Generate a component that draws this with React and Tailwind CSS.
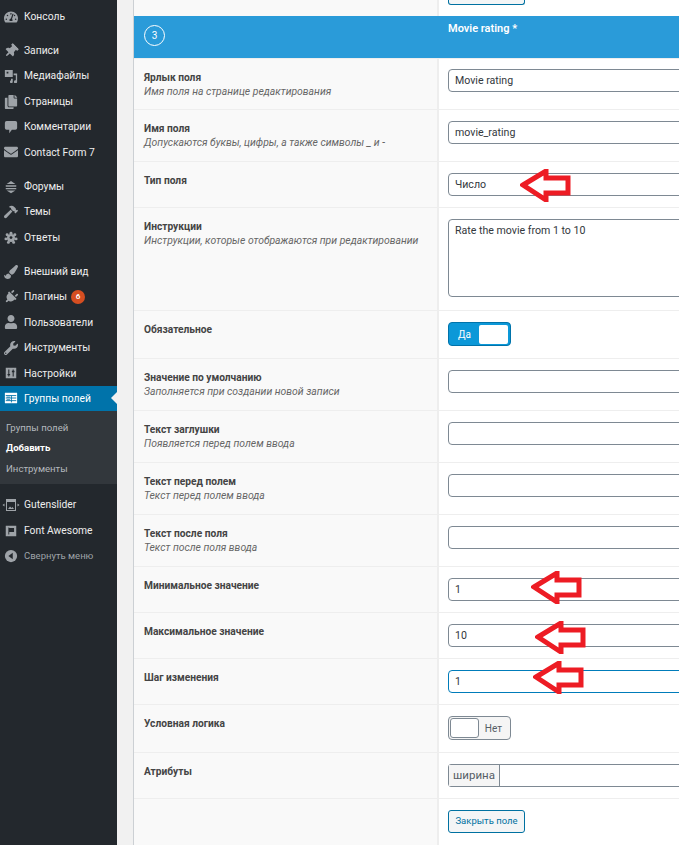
import React from 'react';
import {
  FaTachometerAlt, FaThumbtack, FaCopy, FaEnvelope, FaPaintBrush, FaPlug,
  FaUser, FaWrench, FaHammer,
} from 'react-icons/fa';

const font = 'font-["Roboto","Noto_Sans",sans-serif]';

// dashicons that the icon packages don't have
const Media = ({ className }) => (
  <svg className={className} viewBox="0 0 16 16" fill="currentColor">
    <path d="M1 1h9v8H1z M3 3v2h2V3z" fillRule="evenodd" />
    <path d="M11 5h4v9.5a1.8 1.8 0 1 1-1.5-1.7V7H11z" />
    <path d="M8 11h2v3.5a1.6 1.6 0 1 1-1.5-1.5H8z" />
  </svg>
);
const Bubble = ({ className }) => (
  <svg className={className} viewBox="0 0 16 16" fill="currentColor">
    <path d="M3 1h10a2 2 0 0 1 2 2v6a2 2 0 0 1-2 2H9l-3 4v-4H3a2 2 0 0 1-2-2V3a2 2 0 0 1 2-2z" />
  </svg>
);
const Forum = ({ className }) => (
  <svg className={className} viewBox="0 0 16 16" fill="currentColor">
    <path d="M8 1l5 3.5H3z M2 6h12v1.6H2z M2 9h12v1.6H2z M3 12h10l-5 3z" />
  </svg>
);
const Gear = ({ className }) => (
  <svg className={className} viewBox="0 0 16 16" fill="currentColor">
    <circle cx="8" cy="8" r="4.6" />
    <circle cx="8" cy="2.6" r="1.7" />
    <circle cx="3.6" cy="4.4" r="1.7" />
    <circle cx="12.4" cy="4.4" r="1.7" />
    <circle cx="2.2" cy="9" r="1.7" />
    <circle cx="13.8" cy="9" r="1.7" />
    <circle cx="5" cy="13" r="1.7" />
    <circle cx="11" cy="13" r="1.7" />
    <circle cx="8" cy="7.5" r="1.6" fill="#23282d" />
  </svg>
);
const Sliders = ({ className }) => (
  <svg className={className} viewBox="0 0 16 16">
    <path d="M2 2h12v12H2z" fill="currentColor" />
    <path d="M5.5 4v8M10.5 4v8" stroke="#23282d" strokeWidth="1.2" />
    <path d="M4 9h3v1.5H4zM9 5.5h3V7H9z" fill="#23282d" />
  </svg>
);
const FieldGroups = ({ className }) => (
  <svg className={className} viewBox="0 0 16 16">
    <path d="M1 2h14v12H1z" fill="currentColor" />
    <path d="M2 5.2h12M2 8h12M2 11h12M8.5 5.2V13M3 7h4M3 10h4" stroke="#0073aa" strokeWidth="1" />
  </svg>
);
const Slider = () => (
  <svg className="w-[18px] h-[16px] -mx-[2px] shrink-0 text-[#9ea3a8]" viewBox="0 0 18 16" fill="currentColor">
    <path d="M4 2h10v12H4z M5 5v8h8V5z" fillRule="evenodd" />
    <path d="M6 12l2-2.5 1.5 1.5 1-1 1.5 2z" />
    <path d="M2.5 6.5v3L0.5 8zM15.5 6.5v3l2-1.5z" />
  </svg>
);
const FlagBox = ({ className }) => (
  <svg className={className} viewBox="0 0 16 16">
    <path d="M2 2h12v12H2z" fill="currentColor" />
    <path d="M5 4h1v8H5zM6 4.5h5.5v4.5H6z" fill="#23282d" />
  </svg>
);
const Collapse = ({ className }) => (
  <svg className={className} viewBox="0 0 16 16">
    <circle cx="8" cy="8" r="7" fill="currentColor" />
    <path d="M10 4.2v7.6L5 8z" fill="#23282d" />
  </svg>
);

const Pin = ({ className }) => <FaThumbtack className={`${className} rotate-45`} />;
const Plug = ({ className }) => <FaPlug className={`${className} rotate-45`} />;

const menu = [
  { type: 'gap', h: 'h-[4px]' },
  { label: 'Консоль', Icon: FaTachometerAlt },
  { type: 'gap', h: 'h-[8.7px]' },
  { label: 'Записи', Icon: Pin },
  { label: 'Медиафайлы', Icon: Media },
  { label: 'Страницы', Icon: FaCopy },
  { label: 'Комментарии', Icon: Bubble },
  { label: 'Contact Form 7', Icon: FaEnvelope },
  { type: 'gap', h: 'h-[9px]' },
  { label: 'Форумы', Icon: Forum },
  { label: 'Темы', Icon: FaHammer },
  { label: 'Ответы', Icon: Gear },
  { type: 'gap', h: 'h-[8.8px]' },
  { label: 'Внешний вид', Icon: FaPaintBrush },
  { label: 'Плагины', Icon: Plug, badge: '6' },
  { label: 'Пользователи', Icon: FaUser },
  { label: 'Инструменты', Icon: FaWrench },
  { label: 'Настройки', Icon: Sliders },
];

const MenuItem = ({ label, Icon, badge }) => (
  <div className="flex items-center h-[25.4px] pl-[4px]">
    <Icon className="w-[14px] h-[14px] text-[#9ea3a8] shrink-0" />
    <span className="ml-[6px] text-[10.3px] text-[#eeeeee] whitespace-nowrap">{label}</span>
    {badge && (
      <span className="ml-[4px] w-[14px] h-[14px] rounded-full bg-[#d54e21] text-white text-[8px] font-semibold flex items-center justify-center">
        {badge}
      </span>
    )}
  </div>
);

const Sidebar = () => (
  <div className="w-[117px] shrink-0 bg-[#23282d] h-full">
    {menu.map((item, i) =>
      item.type === 'gap' ? <div key={i} className={item.h} /> : <MenuItem key={i} {...item} />
    )}
    <div className="relative flex items-center h-[25px] pl-[4px] bg-[#0073aa]">
      <FieldGroups className="w-[14px] h-[14px] text-white shrink-0" />
      <span className="ml-[6px] text-[10.3px] text-white whitespace-nowrap">Группы полей</span>
      <div className="absolute right-0 top-[6px] w-0 h-0 border-y-[6px] border-y-transparent border-r-[6px] border-r-[#f1f1f1]" />
    </div>
    <div className="bg-[#32373c] h-[73px] pt-[7px] pl-[6px] text-[9.6px] text-[#b4b9be]">
      <div className="h-[20px] flex items-center">Группы полей</div>
      <div className="h-[21px] flex items-center font-bold text-white">Добавить</div>
      <div className="h-[20px] flex items-center">Инструменты</div>
    </div>
    <div className="h-[8.5px]" />
    <MenuItem label="Gutenslider" Icon={Slider} />
    <MenuItem label="Font Awesome" Icon={FlagBox} />
    <div className="flex items-center h-[25px] pl-[4px]">
      <Collapse className="w-[14px] h-[14px] text-[#9ea3a8]" />
      <span className="ml-[6px] text-[9.5px] text-[#9ea3a8] whitespace-nowrap">Свернуть меню</span>
    </div>
  </div>
);

const Arrow = ({ className }) => (
  <svg className={`absolute ${className}`} width="52" height="33" viewBox="0 0 52 33">
    <polygon points="3,16 26,2 26,9 48,9 48,24 26,24 26,31" fill="#ffffff" stroke="#ed1c24" strokeWidth="5" />
  </svg>
);

const TextBox = ({ value, className = 'border-[#7e8993]' }) => (
  <div className={`w-[300px] h-[23px] border rounded-[4px] bg-white pl-[6px] flex items-center text-[10.6px] text-[#32373c] ${className}`}>
    {value}
  </div>
);

const Row = ({ h, label, hint, children, arrow, pt = 'pt-[11px]' }) => (
  <div className={`relative flex border-t border-[#eeeeee] ${h}`}>
    <div className="w-[303px] shrink-0 bg-[#f9f9f9] pl-[10px] pt-[12px]">
      <div className="text-[10.2px] font-bold text-[#444444] leading-[14px]">{label}</div>
      {hint && <div className="text-[10.4px] italic text-[#666666] leading-[14px]">{hint}</div>}
    </div>
    <div className={`flex-1 bg-white border-l-2 border-[#eeeeee] pl-[9px] overflow-hidden ${pt}`}>{children}</div>
    {arrow}
  </div>
);

const Main = () => (
  <div className="flex-1 min-w-0 h-full bg-[#f1f1f1] pl-[16px]">
    <div className="h-full border-l border-[#ccd0d4] overflow-hidden">
      <div className="flex h-[16px] bg-[#f9f9f9]">
        <div className="w-[303px] shrink-0" />
        <div className="flex-1 bg-white border-l-2 border-[#eeeeee] pl-[9px] overflow-hidden">
          <div className="w-[77px] h-[5px] border border-t-0 border-[#0071a1] rounded-b-[3px] bg-[#f3f5f6]" />
        </div>
      </div>
      <div className="flex h-[42px] bg-[#2a9bd9]">
        <div className="w-[303px] shrink-0 pl-[10px] pt-[9px]">
          <div className="w-[21px] h-[21px] rounded-full border border-white text-white text-[10px] flex items-center justify-center">3</div>
        </div>
        <div className="pl-[11px] pt-[5px] text-[11px] font-semibold text-white">Movie rating *</div>
      </div>
      <Row h="h-[51px]" pt="pt-[10px]" label="Ярлык поля" hint="Имя поля на странице редактирования"><TextBox value="Movie rating" /></Row>
      <Row h="h-[52px]" label="Имя поля" hint="Допускаются буквы, цифры, а также символы _ и -"><TextBox value="movie_rating" /></Row>
      <Row h="h-[46px]" label="Тип поля" arrow={<Arrow className="left-[386px] top-[7px]" />}><TextBox value="Число" /></Row>
      <Row h="h-[103px]" label="Инструкции" hint="Инструкции, которые отображаются при редактировании">
        <div className="w-[300px] h-[78px] border border-[#7e8993] rounded-[4px] pl-[6px] pt-[3px] text-[10.6px] text-[#32373c]">Rate the movie from 1 to 10</div>
      </Row>
      <Row h="h-[48px]" label="Обязательное">
        <div className="w-[63px] h-[24px] rounded-[4px] bg-[#0c98d8] border border-[#0073aa] flex items-center pl-[9px] pr-[2px] text-[10px] text-white">
          <span>Да</span>
          <div className="ml-auto w-[29px] h-[19px] bg-white rounded-[2px]" />
        </div>
      </Row>
      <Row h="h-[52px]" label="Значение по умолчанию" hint="Заполняется при создании новой записи"><TextBox /></Row>
      <Row h="h-[52px]" label="Текст заглушки" hint="Появляется перед полем ввода"><TextBox /></Row>
      <Row h="h-[52px]" label="Текст перед полем" hint="Текст перед полем ввода"><TextBox /></Row>
      <Row h="h-[52px]" label="Текст после поля" hint="Текст после поля ввода"><TextBox /></Row>
      <Row h="h-[46px]" label="Минимальное значение" arrow={<Arrow className="left-[397px] top-[4px]" />}><TextBox value="1" /></Row>
      <Row h="h-[46px]" label="Максимальное значение" arrow={<Arrow className="left-[401px] top-[8px]" />}><TextBox value="10" /></Row>
      <Row h="h-[46px]" label="Шаг изменения" arrow={<Arrow className="left-[399px] top-[2px]" />}><TextBox value="1" className="border-[#007cba]" /></Row>
      <Row h="h-[48px]" label="Условная логика">
        <div className="w-[63px] h-[24px] rounded-[4px] bg-[#f5f5f5] border border-[#7e8993] flex items-center pl-[1px] pr-[8px] text-[10px] text-[#555d66]">
          <div className="w-[29px] h-[20px] bg-white border border-[#7e8993] rounded-[3px]" />
          <span className="ml-auto">Нет</span>
        </div>
      </Row>
      <Row h="h-[46px]" label="Атрибуты">
        <div className="flex w-[300px] h-[23px] border border-[#7e8993] rounded-l-[3px] text-[11.5px] text-[#555d66]">
          <div className="w-[51px] bg-[#f5f5f5] border-r border-[#7e8993] flex items-center justify-center">ширина</div>
        </div>
      </Row>
      <Row h="h-[47px]">
        <div className="w-[77px] h-[23px] border border-[#0071a1] rounded-[3px] bg-[#f3f5f6] text-[9.5px] text-[#0071a1] flex items-center justify-center whitespace-nowrap">Закрыть поле</div>
      </Row>
    </div>
  </div>
);

const App = () => (
  <div className={`flex w-[679px] h-[845px] overflow-hidden ${font}`}>
    <Sidebar />
    <Main />
  </div>
);

export default App;
